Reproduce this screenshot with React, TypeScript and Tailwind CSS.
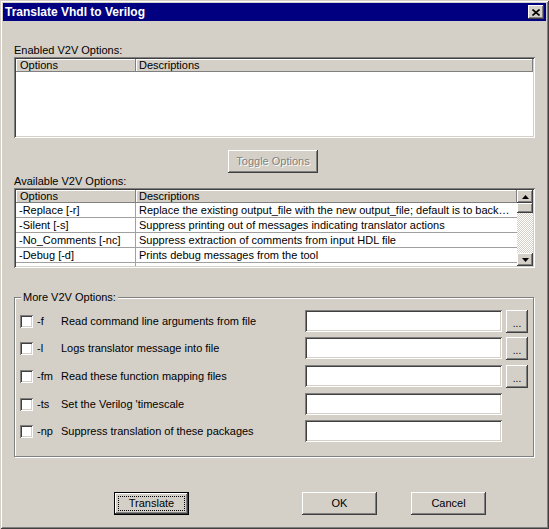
import React from "react";

const raised =
  "shadow-[inset_-1px_-1px_#404040,inset_1px_1px_#ffffff,inset_-2px_-2px_#808080,inset_2px_2px_#d4d0c8]";
const sunken =
  "shadow-[inset_1px_1px_#808080,inset_-1px_-1px_#ffffff,inset_2px_2px_#404040,inset_-2px_-2px_#d4d0c8]";

const availableRows = [
  ["-Replace [-r]", "Replace the existing output_file with the new output_file; default is to backup the existing output_file"],
  ["-Silent [-s]", "Suppress printing out of messages indicating translator actions"],
  ["-No_Comments [-nc]", "Suppress extraction of comments from input HDL file"],
  ["-Debug [-d]", "Prints debug messages from the tool"],
  ["-No_Default_define", "Verilog define directives for 'DEVE and 'DALEF are generated in all output files"],
];

const moreOptions = [
  { flag: "-f", text: "Read command line arguments from file", browse: true, gap: "" },
  { flag: "-l", text: "Logs translator message into file", browse: true, gap: "mt-[5px]" },
  { flag: "-fm", text: "Read these function mapping files", browse: true, gap: "mt-[6px]" },
  { flag: "-ts", text: "Set the Verilog 'timescale", browse: false, gap: "mt-[6px]" },
  { flag: "-np", text: "Suppress translation of these packages", browse: false, gap: "mt-[5px]" },
];

function Arrow({ down }: { down?: boolean }) {
  return (
    <svg width="7" height="4" viewBox="0 0 7 4">
      <polygon points={down ? "0,0 7,0 3.5,4" : "0,4 7,4 3.5,0"} fill="#000" />
    </svg>
  );
}

function Scrollbar() {
  return (
    <div className="flex w-[16px] flex-col">
      <div className={`flex h-[13px] items-center justify-center bg-[#d4d0c8] ${raised}`}>
        <Arrow />
      </div>
      <div className="flex-1 bg-[repeating-conic-gradient(#d4d0c8_0_25%,#ffffff_0_50%)] bg-[length:2px_2px]">
        <div className={`h-[10px] bg-[#d4d0c8] ${raised}`} />
      </div>
      <div className={`flex h-[13px] items-center justify-center bg-[#d4d0c8] ${raised}`}>
        <Arrow down />
      </div>
    </div>
  );
}

function ListView({ rows, scroll, height }: { rows: string[][]; scroll?: boolean; height: string }) {
  return (
    <div className={`${height} bg-white p-[2px] ${sunken}`}>
      <div className="flex h-full overflow-hidden">
        <div className="min-w-0 flex-1 overflow-hidden">
          <div className="flex h-[13px] leading-[13px]">
            <div className="w-[120px] bg-[#d4d0c8] pl-[4px] shadow-[inset_-1px_-1px_#808080,inset_1px_1px_#ffffff]">
              Options
            </div>
            <div className="flex-1 bg-[#d4d0c8] pl-[3px] shadow-[inset_-1px_-1px_#808080,inset_1px_1px_#ffffff]">
              Descriptions
            </div>
          </div>
          {rows.map(([opt, desc]) => (
            <div key={opt} className="flex h-[15px] border-b border-[#a0a0a0] leading-[14px]">
              <div className="w-[120px] truncate border-r border-[#a0a0a0] pl-[3px]">{opt}</div>
              <div className="min-w-0 flex-1 truncate pl-[3px] pr-[2px]">{desc}</div>
            </div>
          ))}
        </div>
        {scroll && <Scrollbar />}
      </div>
    </div>
  );
}

function Checkbox() {
  return <div className={`h-[13px] w-[13px] shrink-0 bg-white ${sunken}`} />;
}

function Button({ label, className = "", disabled, isDefault }: { label: string; className?: string; disabled?: boolean; isDefault?: boolean }) {
  if (isDefault) {
    return (
      <div className={`h-[23px] border border-black bg-[#d4d0c8] ${className}`}>
        <div className={`flex h-full items-center justify-center p-[3px] ${raised}`}>
          <div className="flex h-full w-full items-center justify-center border border-dotted border-black">{label}</div>
        </div>
      </div>
    );
  }
  return (
    <div
      className={`flex h-[23px] items-center justify-center bg-[#d4d0c8] ${raised} ${
        disabled ? "text-[#808080] [text-shadow:1px_1px_#ffffff]" : ""
      } ${className}`}
    >
      {label}
    </div>
  );
}

export default function App() {
  return (
    <div
      className="h-[529px] w-[549px] bg-[#d4d0c8] p-[3px] text-[11px] leading-[13px] text-black shadow-[inset_1px_1px_#d4d0c8,inset_-1px_-1px_#404040,inset_2px_2px_#ffffff,inset_-2px_-2px_#808080]"
      style={{ fontFamily: '"Liberation Sans", Arial, sans-serif' }}
    >
      {/* title bar */}
      <div className="flex h-[18px] items-center bg-[#000080] pl-[2px] pr-[2px]">
        <span className="font-bold text-white text-[12px]">Translate Vhdl to Verilog</span>
        <div className={`ml-auto flex h-[14px] w-[16px] items-center justify-center bg-[#d4d0c8] ${raised}`}>
          <svg width="8" height="7" viewBox="0 0 8 7">
            <path d="M0.5 0.5 L7.5 6.5 M7.5 0.5 L0.5 6.5" stroke="#000" strokeWidth="1.6" />
          </svg>
        </div>
      </div>

      <div className="px-[11px]">
        <div className="mt-[23px]">Enabled V2V Options:</div>
        <ListView rows={[]} height="h-[81px]" />

        <div className="mt-[12px] flex">
          <Button label="Toggle Options" disabled className="ml-[214px] w-[90px]" />
        </div>

        <div className="mt-[2px]">Available V2V Options:</div>
        <ListView rows={availableRows} scroll height="h-[80px]" />

        {/* More options group */}
        <div className="relative mt-[29px] h-[160px] w-[520px] border border-[#808080] pl-[5px] pr-[5px] pt-[12px] shadow-[1px_1px_#ffffff,inset_1px_1px_#ffffff]">
          <span className="absolute left-[6px] top-[-7px] bg-[#d4d0c8] px-[2px]">More V2V Options:</span>
          {moreOptions.map((o) => (
            <div key={o.flag} className={`flex h-[22px] items-center ${o.gap}`}>
              <Checkbox />
              <span className="ml-[4px] w-[24px]">{o.flag}</span>
              <span className="flex-1">{o.text}</span>
              <div className={`h-[22px] w-[197px] bg-white ${sunken}`} />
              {o.browse ? (
                <div className={`ml-[4px] flex h-[23px] w-[22px] items-end justify-center pb-[5px] bg-[#d4d0c8] ${raised} text-[10px] leading-[8px]`}>
                  ...
                </div>
              ) : (
                <div className="ml-[4px] w-[22px]" />
              )}
            </div>
          ))}
        </div>

        <div className="mt-[35px] flex">
          <Button label="Translate" isDefault className="ml-[100px] w-[75px]" />
          <Button label="OK" className="ml-[113px] w-[75px]" />
          <Button label="Cancel" className="ml-[34px] w-[75px]" />
        </div>
      </div>
    </div>
  );
}
